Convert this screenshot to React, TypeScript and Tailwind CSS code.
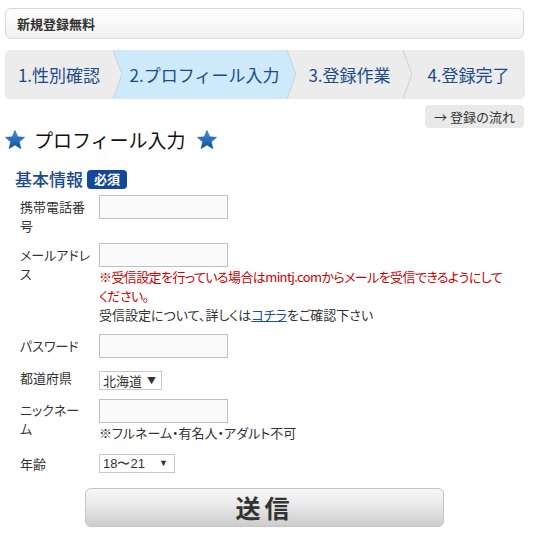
import React from "react";

const JP = "font-['Noto_Sans_CJK_JP','Noto_Sans',sans-serif]";

function Star() {
  return (
    <svg width="20" height="20" viewBox="0 0 24 24">
      <defs>
        <linearGradient id="sg" x1="0" y1="0" x2="0" y2="1">
          <stop offset="0" stopColor="#4a8fdc" />
          <stop offset="1" stopColor="#0b4ea2" />
        </linearGradient>
      </defs>
      <polygon
        points="12,0.5 15.3,8.2 23.5,8.8 17.2,14.2 19.2,22.5 12,18 4.8,22.5 6.8,14.2 0.5,8.8 8.7,8.2"
        fill="url(#sg)"
        stroke="#0b4ea2"
        strokeWidth="0.6"
        strokeLinejoin="round"
      />
    </svg>
  );
}

function Sep({ mode }: { mode: "into" | "out" | "none" }) {
  const gray = "#ececec";
  const blue = "#cdeafb";
  return (
    <svg width="9" height="49" viewBox="0 0 9 49" className="shrink-0 block">
      <rect x="0" y="0" width="9" height="49" fill={mode === "into" ? blue : gray} />
      {mode === "into" && <polygon points="0,0 9,24.5 0,49" fill={gray} />}
      {mode === "out" && <polygon points="0,0 9,24.5 0,49" fill={blue} />}
      <polyline points="0,0 9,24.5 0,49" fill="none" stroke="#cfcfcf" strokeWidth="1" />
    </svg>
  );
}

function Step({ w, active, children }: { w: string; active?: boolean; children: React.ReactNode }) {
  return (
    <div
      className={`${w} h-[49px] flex items-center justify-center text-[17px] text-[#1b4b8c] ${
        active ? "bg-[#cdeafb]" : ""
      }`}
    >
      {children}
    </div>
  );
}

export default function App() {
  return (
    <div className={`w-[536px] h-[541px] bg-white ${JP} text-[#333] overflow-hidden`}>
      <div className="px-[5px] pt-[8px]">
        <div className="w-[519px] h-[31px] rounded-[6px] border border-[#d9d9d9] bg-gradient-to-b from-white to-[#f1f1f1] flex items-center pl-[11px]">
          <span className="text-[13px] font-bold text-[#333]">新規登録無料</span>
        </div>

        <div className="mt-[11px] w-[520px] h-[49px] rounded-[5px] bg-[#ececec] flex overflow-hidden">
          <Step w="w-[108px]">1.性別確認</Step>
          <Sep mode="into" />
          <Step w="w-[165px]" active>
            2.プロフィール入力
          </Step>
          <Sep mode="out" />
          <Step w="w-[107px]">3.登録作業</Step>
          <Sep mode="none" />
          <Step w="w-[113px]">4.登録完了</Step>
        </div>

        <div className="flex justify-end w-[519px] mt-[6px]">
          <div className="h-[23px] w-[99px] rounded-[4px] bg-[#e9e9e9] flex items-center justify-center text-[13px] text-[#333]">
            → 登録の流れ
          </div>
        </div>
      </div>

      <div className="flex items-center pl-[5px] mt-[1px] h-[22px]">
        <Star />
        <span className="ml-[9px] mr-[11px] text-[19px] text-[#111]">プロフィール入力</span>
        <Star />
      </div>

      <div className="flex items-center pl-[15px] mt-[18px] h-[20px]">
        <span className="text-[17px] text-[#1b4b8c] font-medium">基本情報</span>
        <span className="ml-[4px] h-[19px] px-[7px] rounded-[4px] bg-[#14479a] text-white text-[13px] font-bold flex items-center">
          必須
        </span>
      </div>

      <div className="pl-[20px] mt-[6px] text-[13px] leading-[19px] [font-feature-settings:'palt']">
        {/* 携帯電話番号 */}
        <div className="flex items-start">
          <div className="w-[79px] pr-[7px] pt-[2px] whitespace-nowrap">
            携帯電話番
            <br />号
          </div>
          <div className="w-[129px] h-[24px] border border-[#c0c0c0] bg-[#fafafa]" />
        </div>

        {/* メールアドレス */}
        <div className="flex items-start mt-[8px]">
          <div className="w-[79px] pr-[7px] pt-[2px] whitespace-nowrap">
            メールアドレ
            <br />ス
          </div>
          <div className="flex-1">
            <div className="w-[129px] h-[24px] border border-[#c0c0c0] bg-[#fafafa]" />
            <div className="text-[#cc0000] whitespace-nowrap tracking-[-0.6px]">
              ※受信設定を行っている場合はmintj.comからメールを受信できるようにして
              <br />
              ください。
            </div>
            <div className="whitespace-nowrap">
              受信設定について、詳しくは<span className="text-[#1a4f99] underline">コチラ</span>をご確認下さい
            </div>
          </div>
        </div>

        {/* パスワード */}
        <div className="flex items-start mt-[10px]">
          <div className="w-[79px] pr-[7px] pt-[2px]">パスワード</div>
          <div className="w-[129px] h-[24px] border border-[#c0c0c0] bg-[#fafafa]" />
        </div>

        {/* 都道府県 */}
        <div className="flex items-start mt-[10px]">
          <div className="w-[79px] pr-[7px]">都道府県</div>
          <div className="mt-[3px] w-[63px] h-[19px] border border-[#c8c8c8] bg-white flex items-center pl-[3px] text-[13px]">
            <span>北海道</span>
            <span className="ml-[5px] text-[9px]">▼</span>
          </div>
        </div>

        {/* ニックネーム */}
        <div className="flex items-start mt-[9px]">
          <div className="w-[79px] pr-[7px] pt-[1px] whitespace-nowrap">
            ニックネー
            <br />ム
          </div>
          <div className="flex-1">
            <div className="w-[129px] h-[24px] border border-[#c0c0c0] bg-[#fafafa]" />
            <div>※フルネーム・有名人・アダルト不可</div>
          </div>
        </div>

        {/* 年齢 */}
        <div className="flex items-start mt-[12px]">
          <div className="w-[79px] pr-[7px]">年齢</div>
          <div className="w-[76px] h-[19px] border border-[#c8c8c8] bg-white flex items-center pl-[3px] text-[13px] font-['Liberation_Sans',sans-serif]">
            <span className="flex-1">18〜21</span>
            <span className="mr-[6px] text-[9px]">▼</span>
          </div>
        </div>
      </div>

      <div className="mt-[15px] ml-[85px] w-[359px] h-[39px] rounded-[6px] border border-[#c4c4c4] bg-gradient-to-b from-[#f8f8f8] via-[#e6e6e6] to-[#cdcdcd] flex items-center justify-center">
        <span className="text-[25px] font-bold text-[#333] tracking-[4px]">送信</span>
      </div>
    </div>
  );
}
